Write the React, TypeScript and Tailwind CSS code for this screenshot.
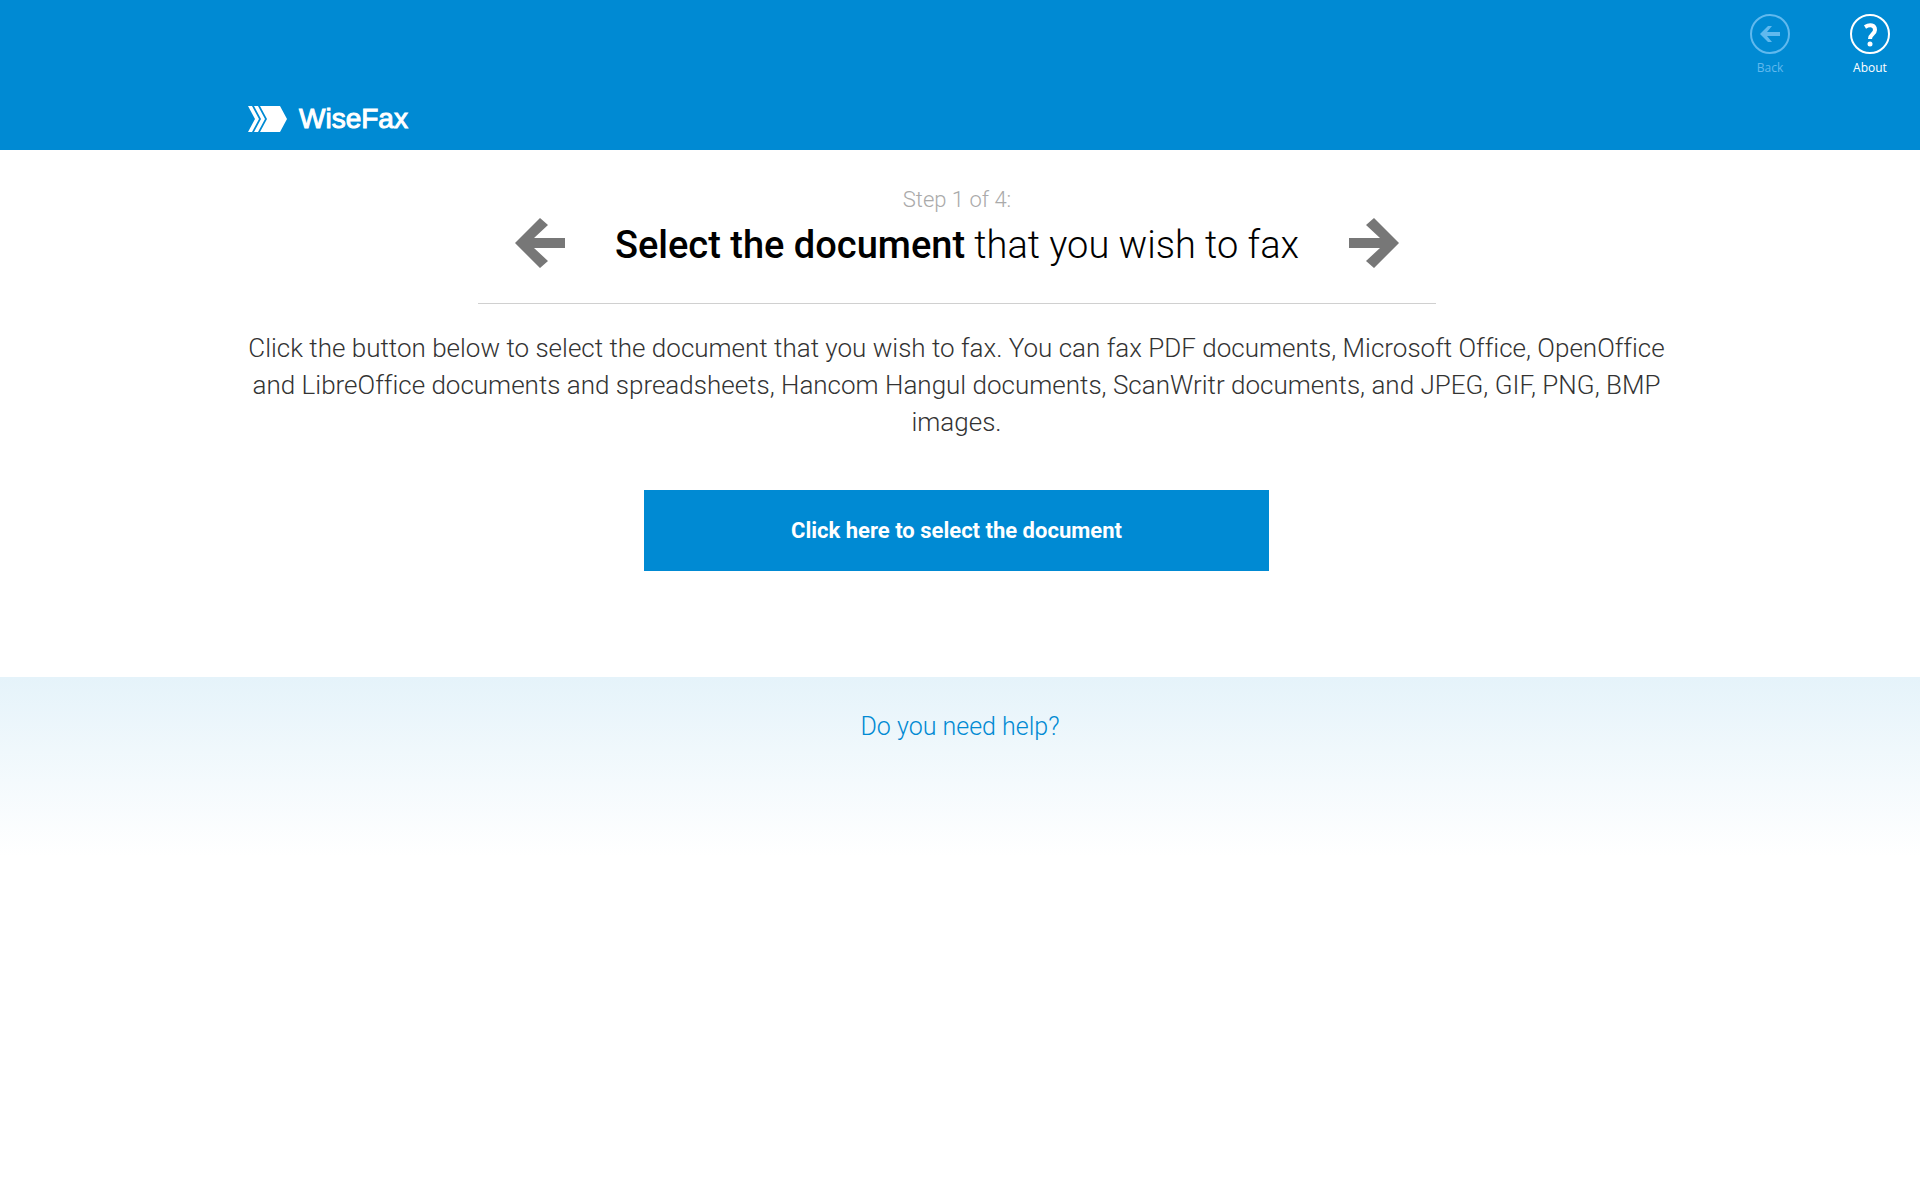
import { ReactNode } from 'react';

function StepArrow({ className = '' }: { className?: string }) {
  return (
    <svg viewBox="0 0 50 50" className={`size-[50px] ${className}`} fill="currentColor" aria-hidden="true">
      <path d="M0 25 25 0 33 7 19 20H50V30H19L33 43 25 50Z" />
    </svg>
  );
}

function HeaderButton({ label, disabled, children }: { label: string; disabled?: boolean; children: ReactNode }) {
  return (
    <button disabled={disabled} className="flex w-[100px] flex-col items-center gap-[5px] text-white disabled:text-[#60b9ee]">
      <svg viewBox="0 0 42 42" className="size-[42px]" fill="none" stroke="currentColor" strokeWidth="2">
        <circle cx="21" cy="21" r="19" />
        {children}
      </svg>
      <span className="font-['Open_Sans',sans-serif] text-xs leading-4 font-normal">{label}</span>
    </button>
  );
}

export default function App() {
  return (
    <div className="min-h-screen bg-white font-[Roboto,sans-serif] font-light text-black">
      <header className="h-[150px] bg-[#008ad3]">
        <div className="flex h-[100px] justify-end pt-[13px]">
          <HeaderButton label="Back" disabled>
            <path d="M11 21 19 13H23L18 19H31V23H18L23 29H19Z" fill="currentColor" stroke="none" />
          </HeaderButton>
          <HeaderButton label="About">
            <path d="M16 14C21 11 26 12 26 17C26 21 21 21 21 26" strokeWidth="4" />
            <circle cx="21" cy="31" r="2.5" fill="currentColor" stroke="none" />
          </HeaderButton>
        </div>
        <div className="flex items-center gap-3 pl-[248px] text-white">
          <svg viewBox="0 0 39 26" className="h-[26px] w-[39px]" fill="currentColor" aria-hidden="true">
            <path d="M0 0H4L11 13 4 26H0L7 13ZM6 0H10L17 13 10 26H6L13 13ZM12 0H32L39 13 32 26H12L19 13Z" />
          </svg>
          <span className="font-['Liberation_Sans',sans-serif] text-[28px] leading-[38px] font-normal [-webkit-text-stroke:1px]">
            WiseFax
          </span>
        </div>
      </header>

      <main className="flex flex-col items-center pt-8 pr-[243px] pl-[236px]">
        <div className="flex w-[958px] max-w-full items-center justify-between border-b border-[#d0d0d0] pt-px pr-9 pb-7 pl-[37px] text-center">
          <button aria-label="Previous step" className="pt-7 text-[#777]">
            <StepArrow />
          </button>
          <div>
            <p className="text-[22px] leading-[34px] text-[#aaa]">Step 1 of 4:</p>
            <h1 className="pb-0.5 text-[38px] leading-[56px]">
              <span className="font-medium">Select the document</span> that you wish to fax
            </h1>
          </div>
          <button aria-label="Next step" className="pt-7 text-[#777]">
            <StepArrow className="rotate-180" />
          </button>
        </div>
        <p className="mt-[26px] text-center text-[26px] leading-[37px] text-[#333] [font-variant-ligatures:none]">
          Click the button below to select the document that you wish to fax. You can fax PDF documents, Microsoft
          Office, OpenOffice and LibreOffice documents and spreadsheets, Hancom Hangul documents, ScanWritr documents,
          and JPEG, GIF, PNG, BMP images.
        </p>
        <button className="mt-[49px] h-[81px] w-[625px] bg-[#008ad3] text-[22px] font-bold text-white">
          Click here to select the document
        </button>
      </main>

      <footer className="mt-[106px] h-[180px] bg-linear-to-b from-[#e5f3fa] to-white pt-8 text-center">
        <a href="#help" className="text-[25px] leading-9 text-[#008ad3]">
          Do you need help?
        </a>
      </footer>
    </div>
  );
}
